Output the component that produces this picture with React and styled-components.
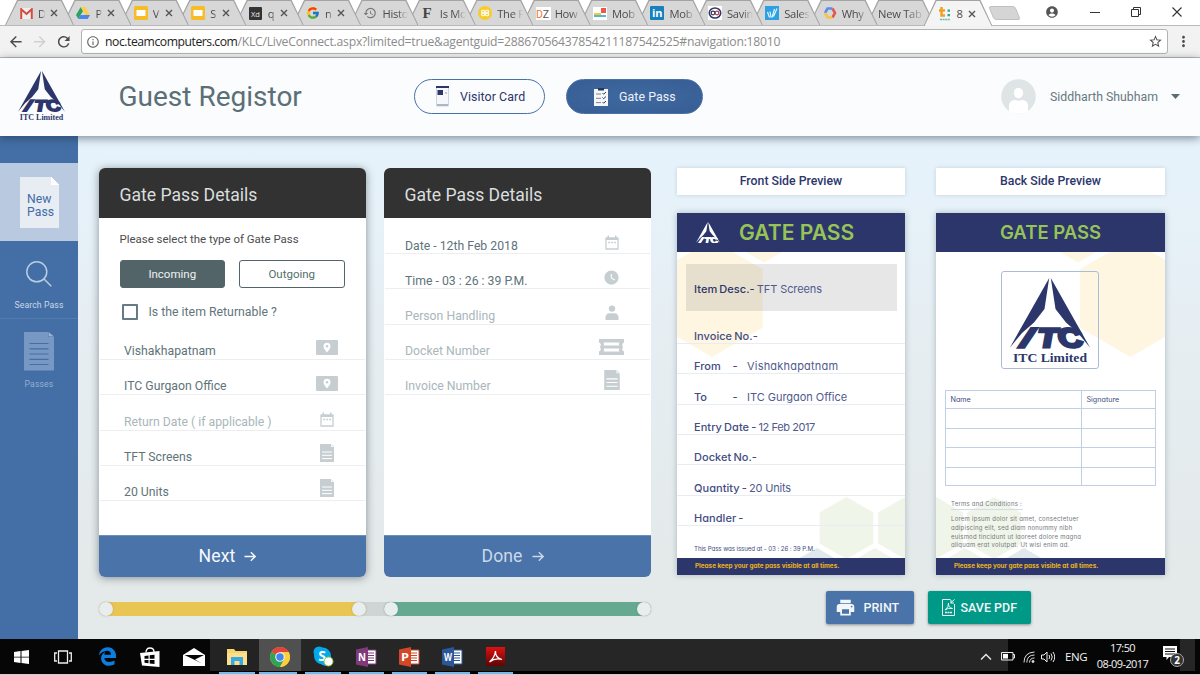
import React from "react";
import styled, { createGlobalStyle, css } from "styled-components";
import {
  MdHistory, MdInfoOutline, MdRefresh, MdArrowBack, MdArrowForward, MdStarBorder,
  MdMoreVert, MdAccountCircle, MdPrint, MdWatchLater, MdPerson,
} from "react-icons/md";
import { FcGoogle } from "react-icons/fc";
import { FaEdgeLegacy } from "react-icons/fa";

const navy = "#2c366b";
const passFont = '"Inter", "Open Sans", sans-serif';
const sysFont = '"Open Sans", "Noto Sans", sans-serif';

const Global = createGlobalStyle`
  * { box-sizing: border-box; }
  html, body { margin: 0; padding: 0; overflow: hidden; }
  body { font-family: Roboto, sans-serif; background: #fff; }
  svg { display: block; flex: none; }
  button { font-family: inherit; margin: 0; }
`;

/* ---------- browser chrome ---------- */
const Screen = styled.div`
  width: 1200px; height: 675px; display: flex; flex-direction: column; overflow: hidden;
`;
const TabStrip = styled.div`
  height: 26px; flex: none; background: #fff; display: flex; align-items: stretch;
  padding-left: 5px; font-family: ${sysFont}; font-size: 11.2px; color: #4c4c4c;
  border-bottom: 1px solid #b9b9b9;
`;
const Tab = styled.div`
  position: relative; z-index: ${(p) => p.$z}; flex: none;
  width: 69px; margin-right: -11.6px; height: ${(p) => (p.$active ? 26 : 25)}px;
  background: #a3a3a3;
  clip-path: polygon(12px 0, 57px 0, 69px 100%, 0 100%);
  display: flex; align-items: center; padding: 1px 10px 0 ${(p) => (p.$bare ? 12 : 14)}px; gap: 5px;
  &::before {
    content: ""; position: absolute; inset: 1px 1px 0 1px; z-index: -1;
    background: ${(p) => (p.$active ? "#f4f4f4" : "#d7d7d7")};
    clip-path: polygon(12px 0, 55px 0, 67px 100%, 0 100%);
  }
`;
const TabIcon = styled.span`
  width: 14px; height: 14px; flex: none; display: grid; place-items: center;
`;
const TabTitle = styled.span`
  flex: 1; min-width: 0; overflow: hidden; white-space: nowrap; letter-spacing: -0.3px;
  mask-image: linear-gradient(90deg, #000 60%, transparent);
  ${(p) => p.$short && css`flex: none; width: ${p.$short}px;`}
  ${(p) => p.$solid && css`mask-image: none; overflow: visible;`}
`;
const NewTabButton = styled.span`
  width: 27px; height: 14px; margin: 6px 0 0 10px; background: #d5d5d5; border: 1px solid #c0c0c0;
  border-radius: 3px; transform: skewX(22deg);
`;
const WindowButtons = styled.div`
  margin-left: auto; display: flex; align-items: center; gap: 31px; padding: 0 18px 2px 0; color: #555;
`;
const Toolbar = styled.div`
  height: 32px; flex: none; background: #f2f2f2; border-bottom: 1px solid #babdc0;
  display: flex; align-items: center; padding: 0 8px 0 7px; color: #4c4c4c;
`;
const NavIcons = styled.div`
  display: flex; width: 74px; gap: 6.5px; align-items: center;
`;
const UrlBox = styled.div`
  flex: none; width: 1086.5px; height: 25px; background: #fff; border: 1px solid #b3b3b3; border-radius: 3px;
  display: flex; align-items: center; padding: 0 4px; margin-right: 7px;
`;
const UrlText = styled.span`
  flex: 1; margin-left: 5px; font: 12.2px ${sysFont}; color: #8b8b8b; letter-spacing: -0.23px; white-space: nowrap;
  b { color: #222; font-weight: 400; letter-spacing: -0.46px; }
`;

/* ---------- application header ---------- */
const Header = styled.header`
  height: 78px; flex: none; background: #fbfcfe; position: relative; z-index: 5;
  display: flex; align-items: center; padding: 0 0 1px 17.5px; box-shadow: 0 2px 9px rgba(30, 45, 60, 0.55);
`;
const Title = styled.h1`
  margin: 0 0 0 54px; width: 295px; font-weight: 400; font-size: 28px; color: #5b6f76;
`;
const Pill = styled.button`
  height: 35px; width: ${(p) => p.$w}px; border-radius: 18px; margin-right: 21px;
  border: 1px solid #4a70a6; display: flex; align-items: center; gap: 11px; padding: 0 0 0 ${(p) => p.$pad}px;
  background: ${(p) => (p.$solid ? "radial-gradient(ellipse, #4069a0, #365e95)" : "#fbfcfe")};
  color: ${(p) => (p.$solid ? "#eef2f8" : navy)}; font-size: 12.4px; letter-spacing: 0.06px;
`;
const User = styled.div`
  margin-left: auto; display: flex; align-items: center; color: #667980; font-size: 12.3px; padding-right: 20px;
`;
const UserName = styled.span`
  margin: 0 13px 0 14px;
`;

/* ---------- body ---------- */
const Body = styled.div`
  flex: none; height: 503px; display: flex;
`;
const Sidebar = styled.nav`
  width: 78px; background: #436fa6; padding-top: 27px; display: flex; flex-direction: column; align-items: center;
`;
const NewPassItem = styled.div`
  width: 78px; height: 78px; background: #b9cae0; display: flex; justify-content: center; align-items: center;
`;
const NewPassSheet = styled.div`
  width: 39px; height: 51px;
  background: linear-gradient(225deg, #b9cae0 5px, #fff 5.5px) top right / 8px 8px no-repeat, #e8edf4;
  color: #3f6ba5; font-size: 12.2px; line-height: 13.6px; padding: 16px 0 0 7.5px; letter-spacing: 0.1px;
`;
const SideItem = styled.div`
  width: 78px; display: flex; flex-direction: column; align-items: center; font-size: 8.7px;
  color: ${(p) => p.$color}; letter-spacing: 0.1px;
`;
const SideRule = styled.div`
  width: 78px; height: 1px; background: #527bb0; margin: 8px 0 13px;
`;
const Content = styled.main`
  flex: 1; background: linear-gradient(#e6f3fc, #e6edf1 45%, #e4eaea 85%);
  padding: 32px 0 0 20.5px; display: flex; align-items: flex-start;
`;
const Forms = styled.section`
  width: 552px; margin-right: 26.5px;
`;
const CardRow = styled.div`
  display: flex; justify-content: space-between;
`;
const Card = styled.div`
  width: 267px; height: 409px; border-radius: 6px; overflow: hidden; background: #fff;
  display: flex; flex-direction: column;
  box-shadow: ${(p) => (p.$raised ? "0 1px 9px rgba(40,50,60,.5)" : "none")};
`;
const CardHead = styled.h2`
  margin: 0; height: 50px; flex: none; background: #323232; color: #dadede; font-weight: 400; font-size: 17.6px;
  padding: 15.5px 0 0 21px; line-height: 23px;
`;
const CardFoot = styled.button`
  height: 42px; margin-top: auto; border: 0; border-top: 1px solid #6f8fba; background: #4a73a9; flex: none;
  color: ${(p) => (p.$dim ? "#cbd8e8" : "#f6f9fc")}; font-size: 17.6px; letter-spacing: 0.1px;
  display: flex; align-items: center; justify-content: center; gap: 9px; padding: 0 8px 1px 0;
`;
const Prompt = styled.p`
  margin: 14px 0 13.5px 21px; font-size: 11.45px; line-height: 14px; color: #4d4d4d;
`;
const Choices = styled.div`
  display: flex; gap: 14px; margin-left: 21px;
`;
const Choice = styled.button`
  width: 105.5px; height: 28px; border-radius: 3px; border: 1.5px solid #53656b; padding: 0;
  background: ${(p) => (p.$on ? "#536469" : "#fff")}; color: ${(p) => (p.$on ? "#edf1f2" : "#53706a")};
  font-size: 11.5px;
`;
const CheckLine = styled.label`
  display: flex; align-items: center; gap: 11px; margin: 15px 0 4.5px 23px; color: #62757c; height: 18px; font-size: 12.3px;
`;
const CheckBox = styled.span`
  width: 16px; height: 16px; border: 2px solid #667b85; border-radius: 1px;
`;
const FieldList = styled.div`
  margin: ${(p) => p.$top || 0}px 1px 0;
`;
const Field = styled.div`
  height: 35.2px; border-bottom: 1px solid #eceeef; display: flex; justify-content: space-between; align-items: flex-end;
  padding: 0 25px 0 ${(p) => p.$l}px; font-size: 12.25px;
  color: ${(p) => (p.$empty ? "#a9b6ba" : "#60737a")};
`;
const FieldText = styled.span`
  line-height: 14px; padding-bottom: ${(p) => p.$b}px;
`;
const IconSlot = styled.span`
  width: 26px; display: flex; justify-content: center; padding-bottom: ${(p) => p.$b}px; color: #c7ced1;
`;
const Progress = styled.div`
  margin-top: 25px; height: 14px; background: #cfd5d5; border-radius: 7px; display: flex; justify-content: space-between;
`;
const Segment = styled.div`
  width: 267px; height: 14px; border-radius: 7px; background: ${(p) => p.$c}; display: flex; justify-content: space-between;
`;
const Knob = styled.span`
  width: 14px; height: 14px; border-radius: 50%; background: #e8edef; box-shadow: 0 0 2px rgba(80,80,60,.35);
`;

/* ---------- previews ---------- */
const Previews = styled.section`
  width: 488px;
`;
const Sides = styled.div`
  display: flex; justify-content: space-between;
`;
const Side = styled.div`
  width: ${(p) => p.$w}px;
`;
const SideTitle = styled.h3`
  margin: 0 0 18px; height: 27px; background: #fff; color: ${navy}; font-weight: 500; font-size: 12.3px;
  display: flex; align-items: center; justify-content: center; box-shadow: 0 0 4px rgba(60,80,100,.2);
  padding-bottom: 1px;
`;
const Pass = styled.article`
  position: relative; height: 361.5px; background: #fff; display: flex; flex-direction: column; overflow: hidden;
  font-family: ${passFont}; font-feature-settings: "cv11"; color: #434d83;
`;
const PassShadow = styled.div`
  box-shadow: 0 0 6px rgba(60,80,100,.35);
`;
const Hexes = styled.svg`
  position: absolute; left: 0; top: 38px;
`;
const PassHead = styled.div`
  position: relative; height: 38.5px; flex: none; background: ${navy}; color: #97c357; font-weight: 600;
  font-size: ${(p) => p.$size}px; line-height: 38px; padding: ${(p) => p.$t || 0}px 0 0 ${(p) => p.$l}px;
  display: flex; align-items: center; gap: ${(p) => p.$gap || 0}px; white-space: nowrap;
`;
const PassFoot = styled.div`
  position: relative; height: 17px; flex: none; margin-top: auto; background: ${navy}; color: #e8b220; font-weight: 700;
  font-size: 6.4px; line-height: 16px; padding-left: 18px; letter-spacing: -0.03px;
`;
const ItemBox = styled.div`
  position: relative; height: 47px; width: 210.5px; margin: 12px 0 3px 9px; background: rgba(60,60,70,.125); flex: none;
  display: flex; align-items: center; padding: 4px 0 0 8px; font-size: 11px; white-space: pre;
`;
const PassLine = styled.div`
  position: relative; height: 30.4px; border-bottom: 1px solid #e9edf3; padding: 14.3px 0 0 17px; line-height: 16px;
  display: flex; white-space: pre; font-size: 11px; flex: none;
`;
const Label = styled.span`
  font-weight: 500; letter-spacing: 0.05px; word-spacing: -0.9px; width: ${(p) => (p.$w ? p.$w + "px" : "auto")};
  color: ${(p) => p.$c || "inherit"};
`;
const Value = styled.span`
  font-weight: 400; letter-spacing: ${(p) => p.$ls ?? -0.2}px; color: #505a8d;
`;
const Issued = styled.div`
  position: relative; margin: 18px 0 0 17px; font-size: 6.2px; line-height: 10px; letter-spacing: -0.1px; white-space: nowrap;
`;
const LogoFrame = styled.div`
  position: relative; width: 98.5px; height: 98px; margin: 19.5px 0 0 64.5px; border: 1px solid #a9bdd8; border-radius: 3px;
  display: grid; place-items: center; flex: none; padding-top: 2px;
`;
const SignTable = styled.div`
  position: relative; width: 211.5px; margin: 21px 0 0 8.5px; border: 1px solid #c0cfe6; border-bottom: 0; flex: none;
`;
const SignRow = styled.div`
  display: grid; grid-template-columns: 136px 1fr; height: ${(p) => p.$h}px; border-bottom: 1px solid #c0cfe6;
  font-size: 7.2px; line-height: 17px;
  span { padding-left: 5px; }
  span:first-child { border-right: 1px solid #c0cfe6; }
`;
const Terms = styled.div`
  position: relative; margin: 13px 0 0 15px; font-size: 6px; line-height: 8.8px; color: #74777d; white-space: nowrap;
  letter-spacing: 0.24px;
`;
const TermsTitle = styled.div`
  width: 72px; border-bottom: 1px solid #d3dbe8; margin-bottom: 5px; height: 11px; padding-top: 0.5px;
`;
const Actions = styled.div`
  display: flex; gap: 14px; margin: 16px 0 0 148.5px;
`;
const Action = styled.button`
  height: 33px; width: ${(p) => p.$w}px; border: 0; border-radius: 2px; background: ${(p) => p.$c}; color: #f2f6f8;
  font-size: 12.5px; font-weight: 500; display: flex; align-items: center; padding: 0 0 0 ${(p) => p.$pad}px; gap: ${(p) => p.$gap}px;
  box-shadow: 0 1px 3px rgba(0,0,0,.4); white-space: nowrap;
`;

/* ---------- taskbar ---------- */
const Taskbar = styled.footer`
  height: 36px; flex: none; background: #060606; display: flex; border-bottom: 1px solid #cfcfcf; color: #f2f2f2;
  font-family: ${sysFont};
`;
const TaskSlot = styled.div`
  width: ${(p) => p.$w}px; height: 35px; display: flex; align-items: center; justify-content: center; flex: none;
  padding-left: ${(p) => p.$pl || 0}px;
  background: ${(p) => p.$bg || "transparent"};
  ${(p) => p.$open && css`
    background-image: linear-gradient(90deg, transparent ${p.$in ?? 4}px, #76b9ed ${p.$in ?? 4}px, #76b9ed calc(100% - 4px), transparent 0), linear-gradient(#000, #000);
    background-size: 100% 2px, 100% 3px; background-position: bottom; background-repeat: no-repeat;
  `}
`;
const TaskFill = styled.div`
  flex: 1; background: #262626; border-bottom: 3px solid #000;
`;
const Tray = styled.div`
  width: 225px; flex: none; display: flex; align-items: center; padding-left: 5px; font-size: 11.5px;
  letter-spacing: -0.35px; border-bottom: 3px solid #000; white-space: nowrap;
  background: linear-gradient(90deg, #262626 33px, #060606 33px 205px, #262626 205px 220px, #060606 220px);
`;
const TrayItem = styled.span`
  flex: none; width: ${(p) => p.$w}px; padding-top: 3px;
`;
const Clock = styled.div`
  flex: none; width: 55px; margin-right: 13px; text-align: center; line-height: 16px; font-size: 11px; padding-top: 2px;
  letter-spacing: -0.6px;
`;

/* ---------- drawings ---------- */
const Logo = ({ w, h, color, caption }) => (
  <svg width={w} height={h} viewBox={caption ? "0 0 80 87" : "0 0 80 70"} fill={color}>
    <path d="M39.200 0 34.500 31 24 44.500 12 55 0 69.500Z" />
    <path d="M40.800 0 45.500 31 56 44.500 68 55 80 69.500Z" />
    <g fontFamily="Liberation Sans, sans-serif" fontWeight="700" fontSize="26.500" stroke={color}>
      <text transform="translate(7 68.500) skewX(-34)" textLength="9" lengthAdjust="spacingAndGlyphs" strokeWidth="3.500">I</text>
      <text transform="translate(27 68.500) skewX(-10)" textLength="19" lengthAdjust="spacingAndGlyphs" strokeWidth="3.200">T</text>
      <text transform="translate(50 68.500) skewX(12)" textLength="24" lengthAdjust="spacingAndGlyphs" strokeWidth="2.800">C</text>
    </g>
    {caption && (
      <text x="3" y="84" fontFamily="Liberation Serif, serif" fontWeight="700" fontSize="12.500" textLength="74" lengthAdjust="spacingAndGlyphs">ITC Limited</text>
    )}
  </svg>
);

const Close = () => (
  <svg width="8" height="8" viewBox="0 0 8 8"><path d="M1 1 7 7M7 1 1 7" stroke="#555" strokeWidth="1.4" /></svg>
);
const Gmail = () => (
  <svg width="13" height="11" viewBox="0 0 13 11"><path d="M0 0h13v11H0z" fill="#eee" /><path d="M1.2 11V1.2L6.5 6l5.3-4.8V11" fill="none" stroke="#d54b3d" strokeWidth="2" /></svg>
);
const Drive = () => (
  <svg width="14" height="12" viewBox="0 0 14 12"><path d="M4.7 0 0 8l2.3 4L7 4z" fill="#2da160" /><path d="M4.7 0h4.6L14 8H9.3z" fill="#fdcf48" /><path d="M4.6 8H14l-2.3 4H2.3z" fill="#4a87ed" /></svg>
);
const Slides = () => (
  <svg width="14" height="14"><rect width="14" height="14" rx="1.5" fill="#f6bd26" /><rect x="2.5" y="4" width="9" height="6" fill="#fff" /></svg>
);
const Xd = () => (
  <svg width="13" height="13"><rect width="13" height="13" rx="1" fill="#333" /><text x="2" y="9.5" fontSize="7.5" fontFamily="Open Sans, sans-serif" fill="#eee">Xd</text></svg>
);
const Serif = () => (
  <svg width="14" height="14"><text x="1.5" y="12" fontSize="15" fontWeight="700" fontFamily="Liberation Serif, serif" fill="#444">F</text></svg>
);
const YellowDot = () => (
  <svg width="14" height="14"><circle cx="7" cy="7" r="7" fill="#f6cd2b" /><g fill="none" stroke="#fff" strokeWidth="1.100"><rect x="3.700" y="4.300" width="2.800" height="2.700" rx="1" /><rect x="3.700" y="7" width="2.800" height="2.700" rx="1" /><rect x="7.700" y="4.300" width="2.800" height="2.700" rx="1" /><rect x="7.700" y="7" width="2.800" height="2.700" rx="1" /></g></svg>
);
const Dz = () => (
  <svg width="15" height="13"><rect width="15" height="13" fill="#fff" /><text y="10.5" fontSize="10.5" fontFamily="Roboto, sans-serif" fill="#f0763a">D<tspan fill="#555">Z</tspan></text></svg>
);
const Blocks = () => (
  <svg width="14" height="13"><rect width="14" height="13" fill="#fff" /><rect x="8" y="1" width="5" height="5" fill="#f2564a" /><path d="M1 6h7v2H1z" fill="#f5c83b" /><path d="M1 8h12v2H1z" fill="#54b8d5" /></svg>
);
const LinkedIn = () => (
  <svg width="14" height="14"><rect width="14" height="14" rx="1" fill="#1681bd" /><text x="2" y="11" fontSize="11" fontWeight="700" fontFamily="Open Sans, sans-serif" fill="#fff">in</text></svg>
);
const Loops = () => (
  <svg width="14" height="14"><rect width="14" height="14" fill="#fff" /><ellipse cx="7" cy="7" rx="5.7" ry="5" fill="none" stroke="#303965" strokeWidth="1.6" /><circle cx="5" cy="7" r="1.8" fill="none" stroke="#303965" strokeWidth="1.2" /><circle cx="9" cy="7" r="1.8" fill="none" stroke="#b34152" strokeWidth="1.2" /></svg>
);
const Sales = () => (
  <svg width="14" height="14"><rect width="14" height="14" fill="#2ba0e3" /><path d="M2.500 6 4.500 11.500M5 5.500l1 6M7 11.500 9.500 3M8.500 10.500 12 2.500" fill="none" stroke="#e6f4fc" strokeWidth="1.2" /></svg>
);
const Cloud = () => (
  <svg width="14" height="14" fill="none" strokeWidth="2.6"><path d="M2 7 4.500 2.500h5" stroke="#5a8fee" /><path d="M9.500 2.500 12 7 9.500 11.500" stroke="#e2594b" /><path d="M9 11.500H4.500L2 7" stroke="#f5c543" /></svg>
);
const Team = () => (
  <svg width="14" height="14"><path d="M3.500 0v8.500h3.500M1 3.500h6" fill="none" stroke="#f0a01e" strokeWidth="2.400" /><path d="M9.500 2.500H12v2.300H9.500zM9.500 7H12v2.300H9.500z" fill="#2ba79c" /><path d="M2 12.500h10" stroke="#66bdb5" strokeWidth="1.4" strokeDasharray="2 .6" /></svg>
);
const VisitorIcon = () => (
  <svg width="13" height="21"><path d="M.5 1v19h12V1z" fill="#f5f7fa" stroke="#cfd5df" /><path d="M0 0h13v2H0z" fill={navy} /><path d="M1.500 4h5.500v5H1.500z" fill={navy} /><path d="M9 6.500h2v1H9z" fill="#8f98b5" /><path d="M1 18h11v2H1z" fill="#aeb6c6" /></svg>
);
const ClipIcon = () => (
  <svg width="14" height="18"><path d="M0 1h14v17H0z" fill="#f4f6f8" /><path d="M4 0h6v2.500H4z" fill="#233863" /><path d="M2 6h5M2 10.300h5M2 14.600h5" stroke="#7d8696" /><path d="m8.500 5 1.200 1.200L12 4M8.500 9.500l1.200 1.200L12 8.500M8.500 14l1.200 1.200L12 13" fill="none" stroke="#333e55" strokeWidth="1" /></svg>
);
const Avatar = () => (
  <svg width="35" height="35" viewBox="0 0 35 35"><circle cx="17.500" cy="17.500" r="17.300" fill="#dfe5e7" /><ellipse cx="17.500" cy="14" rx="4.600" ry="5.200" fill="#fff" /><path d="M8 33v-5.500q0-6.500 6-6.500 3.500 1.500 7 0 6 0 6 6.500V33q-4 1.700-9.500 1.700T8 33z" fill="#fff" /></svg>
);
const Caret = () => (
  <svg width="9" height="5"><path d="M0 0h9L4.500 5z" fill="#5a6d75" /></svg>
);
const Doc = ({ w = 14, h = 18 }) => (
  <svg width={w} height={h} viewBox="0 0 14 18"><path d="M0 0h11v3h3v15H0z" fill="#c7ced1" /><path d="M11.500 0 14 2.500h-2.500z" fill="#e1e5e7" /><path d="M2 8h10M2 11.300h10M2 14.600h10" stroke="#fff" /></svg>
);
const PlacePin = () => (
  <svg width="22" height="15"><rect width="22" height="15" rx="1" fill="#c7ced1" /><path d="M11 12.500Q7.500 8.500 7.500 6.300a3.500 3.500 0 0 1 7 0Q14.500 8.500 11 12.500z" fill="#fff" /><circle cx="11" cy="6.200" r="1.200" fill="#c7ced1" /></svg>
);
const Calendar = () => (
  <svg width="14" height="15"><path d="M1 3.200h12v10.800H1z" fill="none" stroke="#c7ced1" strokeWidth="1.300" /><path d="M1 2.500h12V5H1zM2.500.500H4V3H2.500zM10 .500h1.500V3H10z" fill="#c7ced1" /><path d="M3.300 7.500h7.800" stroke="#c7ced1" strokeWidth="1.500" strokeDasharray="1.800 1.200" /></svg>
);
const Person = () => (
  <svg width="14" height="15" fill="#c7ced1"><circle cx="7" cy="3.600" r="3.200" /><path d="M.5 15v-2.500Q.5 8.500 5 8.300h4q4.500.2 4.500 4.200V15z" /></svg>
);
const Ticket = () => (
  <svg width="25" height="16"><path d="M0 0h25v3.500q-3 1-1 4.500-2 3 1 4.500V16H0v-3.500q3-1.500 1-4.500 2-3.500-1-4.500z" fill="#c7ced1" /><path d="M4.500 3.500H20.500q-1.500 1.500 0 3H4.500q1.500-1.500 0-3zM4.500 9.500H20.500q-1.500 1.500 0 3H4.500q1.500-1.500 0-3z" fill="#fff" /></svg>
);
const Arrow = () => (
  <svg width="13" height="13" viewBox="0 0 13 13"><path d="M.5 6.500H11M6.800 2.200l4.400 4.300-4.400 4.300" fill="none" stroke="currentColor" strokeWidth="1.400" /></svg>
);
const PdfIcon = () => (
  <svg width="13" height="17" fill="none" stroke="#eef8f6" strokeWidth="1"><path d="M8.500.500H.5v16h12V5" /><path d="m8.500 4 4-3.500M9 1v3h3" /><path d="M3 11q4-3 3.500-7Q6 8.500 10.500 9.500 6 8.500 3 11z" /><path d="M3 13.500h7" strokeWidth="1.500" strokeDasharray="2 .5" /></svg>
);
const Office = ({ letter, color }) => (
  <svg width="21" height="20"><path d="M11 3h9v14h-9z" fill="#fff" stroke={color} /><path d="M12 6h6M12 8.500h6M12 11h6M12 13.500h6" stroke={color} /><path d="M0 2.500 12 0v20L0 17.500z" fill={color} /><text x="2" y="14" fontSize="10.500" fontWeight="700" fontFamily="Open Sans, sans-serif" fill="#fff" textLength="8" lengthAdjust="spacingAndGlyphs">{letter}</text></svg>
);
const Skype = () => (
  <svg width="21" height="21"><circle cx="6" cy="6" r="5.500" fill="#04a9ea" /><circle cx="13" cy="14" r="6" fill="#04a9ea" /><circle cx="9.500" cy="10" r="8.500" fill="#04a9ea" /><text x="5.300" y="15" fontSize="14" fontWeight="700" fontFamily="Open Sans, sans-serif" fill="#fff">S</text><circle cx="15.500" cy="15.500" r="4.500" fill="#fff" stroke="#8fc63e" /></svg>
);
const Chrome = () => (
  <svg width="20" height="20" viewBox="0 0 20 20"><circle cx="10" cy="10" r="10" fill="#fdd03b" /><path d="M10 10 1.340 5A10 10 0 0 1 18.660 5z" fill="#e1443a" /><path d="M10 10 1.340 5A10 10 0 0 0 10 20L14.500 12z" fill="#2fa456" /><path d="M10 5h8.660A10 10 0 0 1 10 20L14.500 12z" fill="#fdd03b" /><circle cx="10" cy="10" r="4.800" fill="#f2f2f2" /><circle cx="10" cy="10" r="3.700" fill="#4285ec" /></svg>
);
const Hex = ({ x, y, r, c }) => {
  const w = r * 0.866;
  return <path fill={c} d={`M${x} ${y - r}l${w} ${r / 2}v${r}l${-w} ${r / 2}l${-w} ${-r / 2}v${-r}z`} />;
};

const tabs = [
  [<Gmail />, "D", 1], [<Drive />, "P", 1], [<Slides />, "V", 1], [<Slides />, "S", 1], [<Xd />, "q", 1],
  [<FcGoogle size={14} />, "n", 1], [<MdHistory size={14} color="#777" />, "Histo"], [<Serif />, "Is Mo"],
  [<YellowDot />, "The F"], [<Dz />, "How"], [<Blocks />, "Mob"], [<LinkedIn />, "Mob"], [<Loops />, "Savin"],
  [<Sales />, "Sales"], [<Cloud />, "Why"], [null, "New Tab"],
];

const firstFields = [
  ["Vishakhapatnam", <PlacePin />, 4], ["ITC Gurgaon Office", <PlacePin />, 3],
  ["Return Date ( if applicable )", <Calendar />, 3, true], ["TFT Screens", <Doc />, 3], ["20 Units", <Doc />, 2.5],
];
const secondFields = [
  ["Date - 12th Feb 2018", <Calendar />, 3], ["Time - 03 : 26 : 39 P.M.", <MdWatchLater size={17} />, 2],
  ["Person Handling", <Person />, 4, true], ["Docket Number", <Ticket />, 4, true],
  ["Invoice Number", <Doc w={16} h={20} />, 3.5, true],
];

const FieldRows = ({ rows, left, top, base = 1 }) => (
  <FieldList $top={top}>
    {rows.map(([text, icon, b, empty]) => (
      <Field key={text} $l={left} $empty={empty}>
        <FieldText $b={base}>{text}</FieldText><IconSlot $b={b}>{icon}</IconSlot>
      </Field>
    ))}
  </FieldList>
);

export default function App() {
  return (
    <>
      <Global />
      <Screen>
        <TabStrip>
          {tabs.map(([icon, title, short], i) => (
            <Tab key={i} $z={20 - i} $bare={!icon}>
              {icon && <TabIcon>{icon}</TabIcon>}
              <TabTitle $short={short ? 7 : 0} $solid={!icon}>{title}</TabTitle>
              {short && <Close />}
            </Tab>
          ))}
          <Tab $active $z={30}><TabIcon><Team /></TabIcon><TabTitle $short={6} $solid>8</TabTitle><Close /></Tab>
          <NewTabButton />
          <WindowButtons>
            <MdAccountCircle size={14} />
            <svg width="10" height="10"><path d="M0 5.500h10" stroke="#333" /></svg>
            <svg width="10" height="10" fill="none" stroke="#333"><path d="M.5 2.500h7v7h-7zM2.500 2V.500h7v7H8" /></svg>
            <svg width="10" height="10"><path d="M.5.500l9 9M9.500.500l-9 9" stroke="#333" strokeWidth="1.100" /></svg>
          </WindowButtons>
        </TabStrip>
        <Toolbar>
          <NavIcons>
            <MdArrowBack size={17.5} /><MdArrowForward size={17.5} color="#d0d0d0" /><MdRefresh size={17.5} />
          </NavIcons>
          <UrlBox>
            <MdInfoOutline size={14} color="#666" />
            <UrlText><b>noc.teamcomputers.com</b>/KLC/LiveConnect.aspx?limited=true&amp;agentguid=28867056437854211187542525#navigation:18010</UrlText>
            <MdStarBorder size={15} />
          </UrlBox>
          <MdMoreVert size={17} />
        </Toolbar>

        <Header>
          <Logo w={47} h={51} color={navy} caption />
          <Title>Guest Registor</Title>
          <Pill $w={131.5} $pad={21.5}><VisitorIcon />Visitor Card</Pill>
          <Pill $w={137} $pad={27} $solid><ClipIcon />Gate Pass</Pill>
          <User>
            <Avatar /><UserName>Siddharth Shubham</UserName><Caret />
          </User>
        </Header>

        <Body>
          <Sidebar>
            <NewPassItem><NewPassSheet>New<br />Pass</NewPassSheet></NewPassItem>
            <SideItem $color="#c9d7e8">
              <svg width="26" height="59" viewBox="0 -20 26 59" fill="none" stroke="#b9cbe1" strokeWidth="1.500"><circle cx="10.800" cy="10.800" r="10" /><path d="m18 18 7.300 7.300" /></svg>
              Search Pass
            </SideItem>
            <SideRule />
            <SideItem $color="#93aed1">
              <svg width="30" height="47" viewBox="0 0 30 47"><path d="M0 0h24v5h6v33.500H0z" fill="#7798c3" /><path d="M24.500 0 30 4.500h-5.500z" fill="#9cb4d4" /><path d="M5.500 11.500h19M5.500 16.800h19M5.500 22h19M5.500 27.300h19M5.500 32.500h19" stroke="#436fa6" strokeWidth="1.200" /></svg>
              Passes
            </SideItem>
          </Sidebar>

          <Content>
            <Forms>
              <CardRow>
                <Card $raised>
                  <CardHead>Gate Pass Details</CardHead>
                  <Prompt>Please select the type of Gate Pass</Prompt>
                  <Choices><Choice $on>Incoming</Choice><Choice>Outgoing</Choice></Choices>
                  <CheckLine><CheckBox />Is the item Returnable ?</CheckLine>
                  <FieldRows rows={firstFields} left={24.5} />
                  <CardFoot>Next <Arrow /></CardFoot>
                </Card>
                <Card>
                  <CardHead>Gate Pass Details</CardHead>
                  <FieldRows rows={secondFields} left={20.5} top={1} base={0.5} />
                  <CardFoot $dim>Done <Arrow /></CardFoot>
                </Card>
              </CardRow>
              <Progress>
                <Segment $c="#e9c653"><Knob /><Knob /></Segment>
                <Segment $c="#65a991"><Knob /><Knob /></Segment>
              </Progress>
            </Forms>

            <Previews>
              <Sides>
                <Side $w={228}>
                  <SideTitle>Front Side Preview</SideTitle>
                  <PassShadow>
                    <Pass>
                      <Hexes width="228" height="324">
                        <Hex x={35} y={47.5} r={58.5} c="#fff6e1" /><Hex x={87} y={-47} r={58.5} c="#fff6e1" />
                        <Hex x={169.5} y={277} r={31} c="#f0f5e9" /><Hex x={228} y={277} r={31} c="#f0f5e9" />
                        <Hex x={198} y={328} r={31} c="#f0f5e9" /><Hex x={140} y={328} r={31} c="#e2e9ec" />
                      </Hexes>
                      <PassHead $size={21.1} $l={18.5} $gap={19.5} $t={1}><Logo w={24} h={21} color="#fff" />GATE PASS</PassHead>
                      <ItemBox><Label $c={navy}>Item Desc.- </Label><Value $ls={-0.1}>TFT Screens</Value></ItemBox>
                      <PassLine><Label>Invoice No.-</Label></PassLine>
                      <PassLine><Label $w={38.5}>From</Label><Label $w={14.5}>-</Label><Value $ls={0.2}>Vishakhapatnam</Value></PassLine>
                      <PassLine><Label $w={38.5}>To</Label><Label $w={14.5}>-</Label><Value $ls={-0.03}>ITC Gurgaon Office</Value></PassLine>
                      <PassLine><Label>Entry Date - </Label><Value $ls={-0.4}>12 Feb 2017</Value></PassLine>
                      <PassLine><Label>Docket No.-</Label></PassLine>
                      <PassLine><Label>Quantity - </Label><Value>20 Units</Value></PassLine>
                      <PassLine><Label>Handler -</Label></PassLine>
                      <Issued>This Pass was issued at - 03 : 26 : 39 P.M.</Issued>
                      <PassFoot>Please keep your gate pass visible at all times.</PassFoot>
                    </Pass>
                  </PassShadow>
                </Side>
                <Side $w={229}>
                  <SideTitle>Back Side Preview</SideTitle>
                  <PassShadow>
                    <Pass>
                      <Hexes width="229" height="324">
                        <Hex x={194.5} y={47.5} r={58.5} c="#fff6e1" /><Hex x={142} y={-47} r={58.5} c="#fff6e1" />
                        <Hex x={0} y={277} r={31} c="#f0f5e9" /><Hex x={58} y={277} r={31} c="#f0f5e9" />
                        <Hex x={29} y={328} r={31} c="#f0f5e9" /><Hex x={88} y={328} r={31} c="#e2e9ec" />
                      </Hexes>
                      <PassHead $size={18.5} $l={64}>GATE PASS</PassHead>
                      <LogoFrame><Logo w={80} h={87} color={navy} caption /></LogoFrame>
                      <SignTable>
                        <SignRow $h={18}><span>Name</span><span>Signature</span></SignRow>
                        <SignRow $h={19.5}><span /><span /></SignRow>
                        <SignRow $h={19.5}><span /><span /></SignRow>
                        <SignRow $h={19.5}><span /><span /></SignRow>
                        <SignRow $h={18.5}><span /><span /></SignRow>
                      </SignTable>
                      <Terms>
                        <TermsTitle>Terms and Conditions :</TermsTitle>
                        Lorem ipsum dolor sit amet, consectetuer<br />
                        adipiscing elit, sed diam nonummy nibh<br />
                        euismod tincidunt ut laoreet dolore magna<br />
                        aliquam erat volutpat. Ut wisi enim ad.
                      </Terms>
                      <PassFoot>Please keep your gate pass visible at all times.</PassFoot>
                    </Pass>
                  </PassShadow>
                </Side>
              </Sides>
              <Actions>
                <Action $w={88} $c="#4a73a9" $pad={9} $gap={8}><MdPrint size={21} />PRINT</Action>
                <Action $w={103} $c="#009887" $pad={14} $gap={6}><PdfIcon />SAVE PDF</Action>
              </Actions>
            </Previews>
          </Content>
        </Body>

        <Taskbar>
          <TaskSlot $w={42}><svg width="15" height="14" fill="#fff"><path d="M0 2l6.500-1v5.700H0zM7.500.900 15 0v6.700H7.500zM0 7.500h6.500V13L0 12zM7.500 7.500H15V14l-7.500-1z" /></svg></TaskSlot>
          <TaskSlot $w={42}><svg width="18" height="14" fill="none" stroke="#eee" strokeWidth="1.300"><path d="M4.500 1h9v12h-9zM3 3H.700v8H3M15 3h2.300v8H15" /></svg></TaskSlot>
          <TaskSlot $w={47}><FaEdgeLegacy size={19} color="#0a7fe0" /></TaskSlot>
          <TaskSlot $w={38}><svg width="20" height="20"><path d="M0 6 19.500 4v16L2 18.500z" fill="#fff" /><path d="M6 5.500Q6 1 10 1t4 4" fill="none" stroke="#fff" strokeWidth="1.300" /><path d="M4.500 9 8.500 8.500v3.300h-4zM9.700 8.300l4.800-.6v4.100H9.700zM4.500 13h4v3.200l-4-.4zM9.700 13h4.800v4l-4.800-.6z" fill="#060606" /></svg></TaskSlot>
          <TaskSlot $w={41} $pl={9}><svg width="22" height="18"><path d="M0 7 11 0l11 7v11H0z" fill="#fff" /><path d="M1.500 7h19.500L12 11.500l7 4z" fill="#060606" /></svg></TaskSlot>
          <TaskSlot $w={49} $pl={4} $bg="#232323" $open $in={9}><svg width="20" height="18"><path d="M0 1h7l1.500 2H20v14H0z" fill="#fbd56b" /><path d="M0 5h20v12H0z" fill="#fde08c" /><path d="M4 9h12v8h-3.500v-4h-5v4H4z" fill="#38a9e4" /></svg></TaskSlot>
          <TaskSlot $w={42} $bg="#505050" $open $in={0}><Chrome /></TaskSlot>
          <TaskSlot $w={44} $bg="#262626" $open><Skype /></TaskSlot>
          <TaskSlot $w={43} $bg="#262626" $open><Office letter="N" color="#80397b" /></TaskSlot>
          <TaskSlot $w={43} $bg="#262626" $open><Office letter="P" color="#d24726" /></TaskSlot>
          <TaskSlot $w={43} $bg="#262626" $open><Office letter="W" color="#2b579a" /></TaskSlot>
          <TaskSlot $w={43} $bg="#262626" $open><svg width="19" height="19"><defs><linearGradient id="ac" x2="0" y2="1"><stop stopColor="#e01010" /><stop offset="1" stopColor="#5e0505" /></linearGradient></defs><rect width="19" height="19" fill="url(#ac)" /><path d="M3.500 15Q9 10 9.500 4 9 10.500 16 12.500 9 10.500 3.500 15z" fill="none" stroke="#fff" strokeWidth="1.300" /></svg></TaskSlot>
          <TaskFill />
          <Tray>
            <TrayItem $w={21}><svg width="12" height="8"><path d="M1 6.500l5-5 5 5" fill="none" stroke="#eee" strokeWidth="1.300" /></svg></TrayItem>
            <TrayItem $w={22}><svg width="14" height="9"><path d="M.5.500h11.500v7.500H.5zM12 2.500h1.500v3.500H12" fill="none" stroke="#eee" /><path d="M2 2h5v4.500H2z" fill="#fff" /></svg></TrayItem>
            <TrayItem $w={18}><svg width="12" height="12" fill="none" stroke="#ddd"><path d="M1 11.500Q1 1.500 11.500 1M3.800 11.500Q4 4 11.500 4M6.500 11.500Q6.800 7 11.500 7" /><circle cx="10" cy="10.500" r="1" fill="#ddd" /></svg></TrayItem>
            <TrayItem $w={24}><svg width="14" height="12" fill="none" stroke="#eee"><path d="M.5 4v4H3l3 3V1L3 4zM8 4q1.500 2 0 4M10 2.500q2.500 3.500 0 7M12 1q3.500 5 0 10" /></svg></TrayItem>
            <TrayItem $w={30}>ENG</TrayItem>
            <Clock>17:50<br />08-09-2017</Clock>
            <svg width="24" height="25"><path d="M0 3h14v11H6l-2.500 3V14H0z" fill="#fff" /><path d="M2 6h10M2 8.500h10M2 11h10" stroke="#111" /><circle cx="14" cy="17" r="6.500" fill="#333" stroke="#aaa" /><text x="11.300" y="20.800" fontSize="10" fontWeight="700" fill="#fff">2</text></svg>
          </Tray>
        </Taskbar>
      </Screen>
    </>
  );
}
